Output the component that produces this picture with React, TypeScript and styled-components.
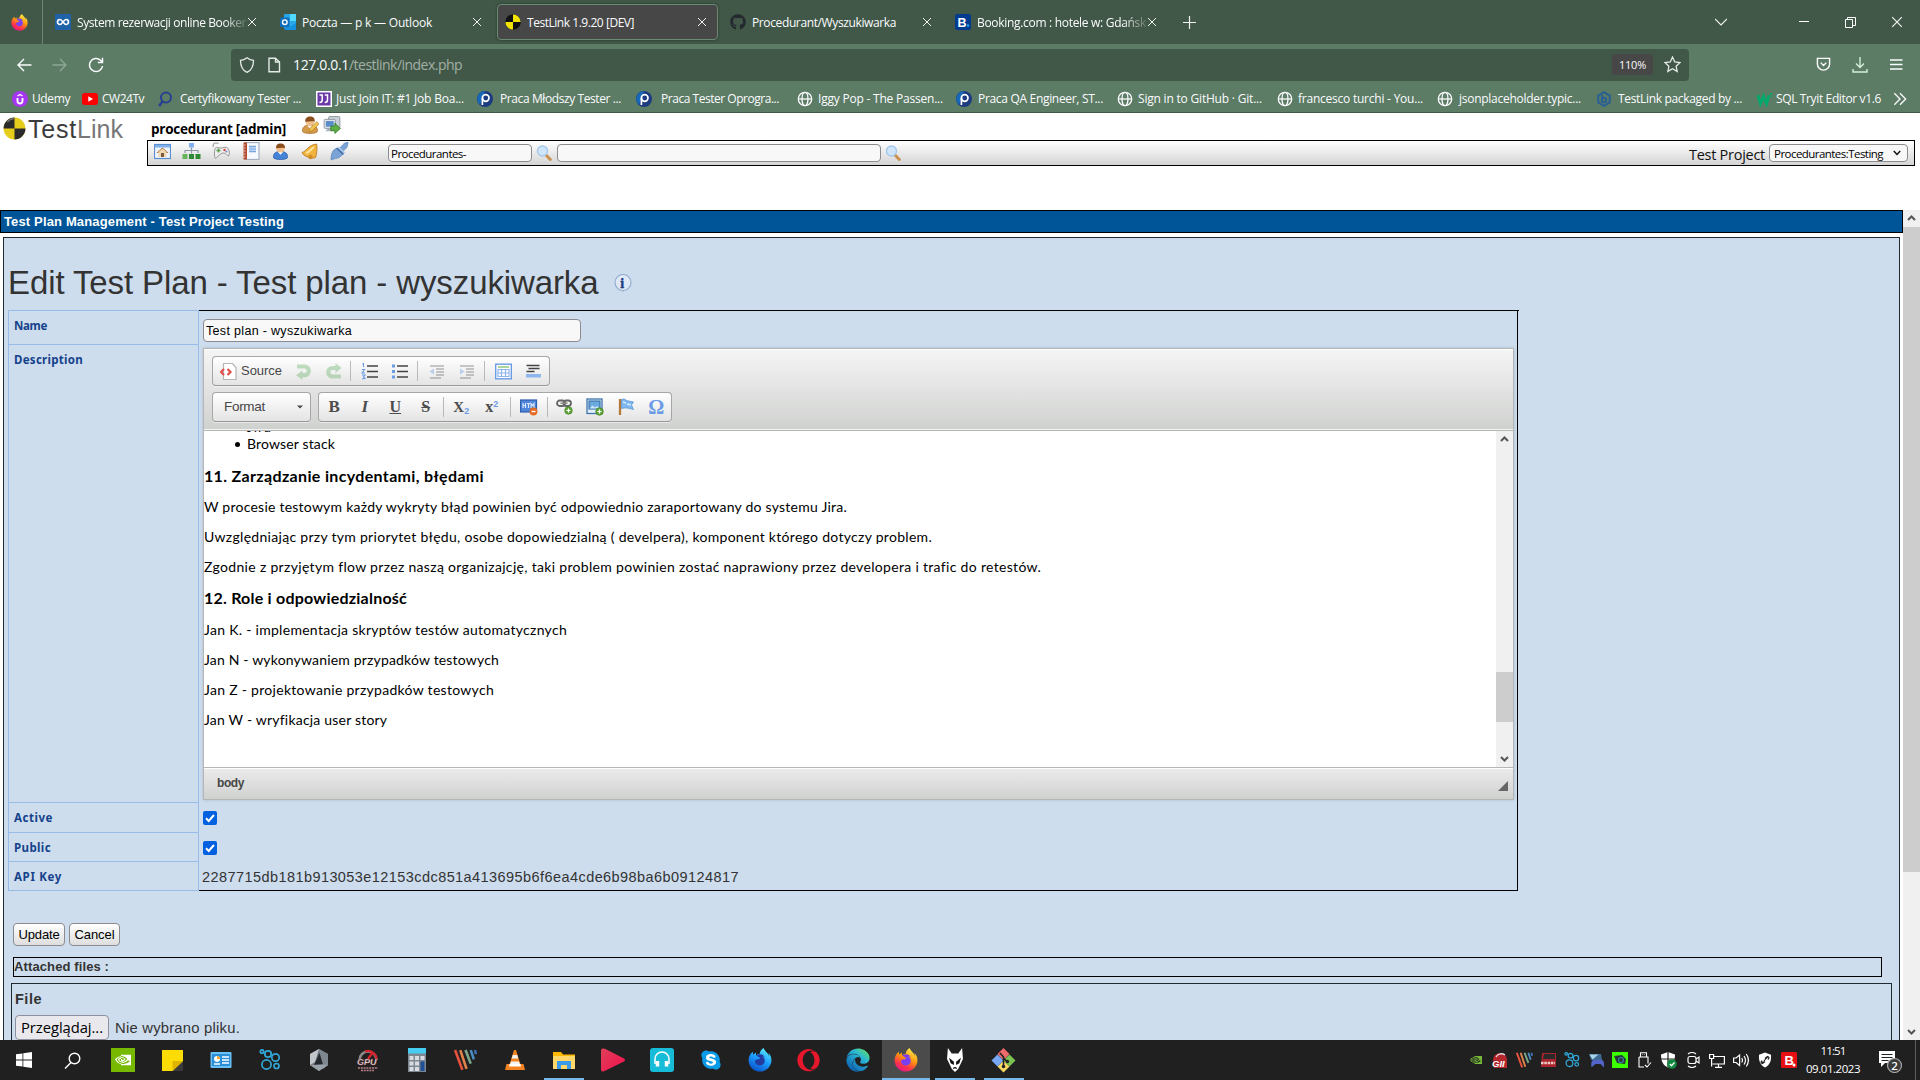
import React, { useLayoutEffect, useRef } from "react";
import styled, { createGlobalStyle, css } from "styled-components";
import { FaGithub, FaYoutube, FaOpera, FaEdge, FaFirefoxBrowser, FaSkype } from "react-icons/fa";
import { SiNvidia } from "react-icons/si";

const ui = `"Open Sans", "Noto Sans", sans-serif`;
const arial = `"Liberation Sans", Arial, sans-serif`;

const GlobalStyle = createGlobalStyle`
  * { box-sizing: border-box; }
  body { margin: 0; overflow: hidden; background: #fff; font-family: ${arial}; }
  svg { display: block; flex: none; }
`;

/* ---------- text helper: tracks a run of text out to a known width ---------- */

const Run = styled.span`
  display: inline-block;
  white-space: pre;
`;

const Text = ({ w, children }: { w: number; children: string }) => {
  const ref = useRef<HTMLSpanElement>(null);
  useLayoutEffect(() => {
    const el = ref.current;
    if (!el) return;
    el.style.letterSpacing = "0px";
    const natural = el.getBoundingClientRect().width;
    el.style.letterSpacing = `${(w - natural) / children.length}px`;
  }, [w, children]);
  return <Run ref={ref}>{children}</Run>;
};

/* ---------- browser chrome ---------- */

const Screen = styled.div`
  width: 1920px;
  height: 1080px;
  display: flex;
  flex-direction: column;
  overflow: hidden;
`;

const TabBar = styled.div`
  height: 44px;
  flex: none;
  background: #415848;
  display: flex;
  color: #fbfbfe;
  font: 12px ${ui};
`;

const FirefoxView = styled.div`
  width: 43px;
  padding: 0 4px 0 0;
  margin-right: 2px;
  border-right: 1px solid #6c8574;
  display: flex;
  align-items: center;
  justify-content: center;
`;

const TabBox = styled.div<{ $active?: boolean }>`
  width: 221px;
  height: 36px;
  margin: 4px 2px;
  padding: 0 9px 0 ${(p) => (p.$active ? 7 : 8)}px;
  display: flex;
  align-items: center;
  border-radius: 4px;
  ${(p) => p.$active && css`
    background: #474747;
    border: 1px solid #6b8b75;
    box-shadow: 0 0 3px #0006;
  `}
`;

const TabTitle = styled.div<{ $fade?: boolean }>`
  margin-left: 6px;
  width: 170px;
  flex: none;
  overflow: hidden;
  ${(p) => p.$fade && css`mask-image: linear-gradient(90deg, #000 86%, #0003 99%);`}
`;

const TabButtons = styled.div`
  flex: 1;
  display: flex;
  align-items: center;
  padding-left: 12px;
`;

const WindowButtons = styled.div`
  margin-left: auto;
  padding-right: 17px;
  display: flex;
  align-items: center;
`;

const Gap = styled.div<{ $w: number }>`
  width: ${(p) => p.$w}px;
  flex: none;
`;

const NavBar = styled.div`
  height: 40px;
  flex: none;
  background: #5c7c65;
  display: flex;
  align-items: center;
  padding: 1px 16px 0;
`;

const UrlBar = styled.div`
  width: 1458px;
  height: 32px;
  margin: 0 127px 0 127px;
  padding: 0 8px;
  border-radius: 4px;
  background: #415848;
  display: flex;
  align-items: center;
`;

const Address = styled.div`
  margin-left: 11px;
  flex: 1;
  color: #a3b0a6;
  font: 14px ${ui};
  b { color: #fbfbfe; font-weight: 400; }
`;

const ZoomBadge = styled.div`
  width: 41px;
  height: 21px;
  margin-right: 11px;
  border-radius: 3px;
  background: #474747;
  color: #fbfbfe;
  font: 11px/21px ${ui};
  text-align: center;
`;

const BookmarksBar = styled.div`
  height: 29px;
  flex: none;
  background: #5c7c65;
  border-bottom: 1px solid #415848;
  padding: 1px 0 0 12px;
  display: flex;
  align-items: center;
  color: #fbfbfe;
  font: 12px ${ui};
`;

const Bookmark = styled.div<{ $w: number }>`
  width: ${(p) => p.$w}px;
  flex: none;
  display: flex;
  align-items: center;
`;

const BookmarkLabel = styled.div<{ $gap: number }>`
  margin-left: ${(p) => p.$gap}px;
`;

/* ---------- TestLink header ---------- */

const SiteHeader = styled.header`
  height: 97px;
  flex: none;
  display: flex;
  background: #fff;
`;

const Brand = styled.div`
  width: 147px;
  padding: 4px 0 0 3px;
  display: flex;
  font: 25px/25px ${arial};
  color: #3c3c3c;
`;

const BrandName = styled.div`
  margin-left: 2px;
  white-space: nowrap;
  i { font-style: normal; color: #777; }
`;

const HeaderMain = styled.div`
  width: 1768px;
`;

const UserLine = styled.div`
  height: 27px;
  padding: 4px 0 0 4px;
  display: flex;
  align-items: center;
  font: bold 13.5px ${ui};
  color: #000;
  svg { margin-top: -8px; }
`;

const MenuBar = styled.nav`
  height: 26px;
  border: 1px solid #000;
  background: linear-gradient(#fff, #ececec 45%, #d4d4d4);
  padding: 0 6px 0 4px;
  display: flex;
  align-items: center;
`;

const MenuIcons = styled.div`
  display: flex;
  gap: 9.5px;
  margin: -4px 39px 0 0;
`;

const Field = styled.div<{ $w: number; $h?: number; $ml?: number }>`
  width: ${(p) => p.$w}px;
  height: ${(p) => p.$h ?? 18}px;
  margin-left: ${(p) => p.$ml ?? 0}px;
  padding: 0 2px;
  display: flex;
  align-items: center;
  border: 1px solid #8b8b90;
  border-radius: 4px;
  background: #f8f8f8;
  color: #000;
`;

const SmallText = styled.div`
  padding-top: 1px;
  font: 11.5px/16px ${ui};
  white-space: nowrap;
`;

const ProjectLabel = styled.div`
  margin-left: auto;
  padding-top: 3px;
  font: 14.5px/18px ${ui};
  color: #111;
`;

/* ---------- page frame ---------- */

const Frame = styled.div`
  height: 830px;
  flex: none;
  display: flex;
`;

const Page = styled.main`
  width: 1903px;
  height: 830px;
  overflow: hidden;
`;

const TitleBar = styled.div`
  height: 23px;
  border: 1px solid #000;
  background: #005498;
  padding: 1px 0 0 3px;
  color: #fff;
  font: bold 13px/20px ${arial};
`;

const WorkPane = styled.section`
  margin: 4px 3px 0;
  height: 820px;
  border: 1px solid #1f2a33;
  background: #cddded;
  padding: 0 7px 0 4px;
`;

const Heading = styled.h1`
  margin: 0;
  height: 72px;
  padding-top: 17px;
  display: flex;
  align-items: center;
  gap: 15px;
  color: #333;
  font: 400 33px/36px ${arial};
`;

const PlanForm = styled.div`
  width: 1510px;
  display: grid;
  grid-template-columns: 191px 1319px;
  grid-template-rows: 34px 458px 30px 29px 29px;
  border-bottom: 1px solid #000;
  border-right: 1px solid #000;
`;

const Label = styled.div<{ $last?: boolean }>`
  border: 1px solid #99bbe8;
  border-bottom-width: ${(p) => (p.$last ? 1 : 0)}px;
  margin-bottom: ${(p) => (p.$last ? -1 : 0)}px;
  padding: 6px 0 0 5px;
  color: #15428b;
  font: bold 11.5px/18px "Noto Sans", "DejaVu Sans", sans-serif;
`;

const Value = styled.div<{ $top?: boolean; $pt?: number }>`
  padding: ${(p) => p.$pt ?? 0}px 3px 0 4px;
  margin-right: -1px;
  border-top: ${(p) => (p.$top ? "1px solid #000" : "0")};
`;

const KeyValue = styled(Value)`
  padding-left: 3px;
`;

const ArialText = styled.div<{ $size: number; $bold?: boolean; $color?: string }>`
  font: ${(p) => (p.$bold ? "bold" : 400)} ${(p) => p.$size}px/18px ${arial};
  color: ${(p) => p.$color ?? "#333"};
  white-space: nowrap;
`;

/* ---------- rich text editor ---------- */

const Editor = styled.div`
  width: 1311px;
  height: 452px;
  border: 1px solid #b6b6b6;
  box-shadow: 0 0 3px #00000026;
  display: flex;
  flex-direction: column;
`;

const EditorTop = styled.div`
  height: 82px;
  flex: none;
  padding: 7px 8px;
  border-bottom: 1px solid #b6b6b6;
  box-shadow: inset 0 1px #fff, inset 0 -1px #f3f3f3;
  background: linear-gradient(#f5f5f5, #cfd1cf);
`;

const ToolRow = styled.div`
  display: flex;
  gap: 7px;
  height: 36px;
`;

const ToolGroup = styled.div<{ $w: number }>`
  width: ${(p) => p.$w}px;
  height: 30px;
  border: 1px solid #a6a6a6;
  border-bottom-color: #979797;
  border-radius: 4px;
  background: linear-gradient(#fff, #e4e4e4);
  box-shadow: 0 1px #ffffff80;
  display: flex;
  align-items: center;
`;

const Tool = styled.div<{ $w?: number; $dim?: boolean }>`
  width: ${(p) => p.$w ?? 30.5}px;
  flex: none;
  display: flex;
  align-items: center;
  justify-content: center;
  opacity: ${(p) => (p.$dim ? 0.4 : 1)};
`;

const Glyph = styled.span<{ $italic?: boolean; $line?: string; $size?: number; $blue?: boolean }>`
  font: ${(p) => (p.$italic ? "italic" : "normal")} bold ${(p) => p.$size ?? 17}px/20px "Liberation Serif", serif;
  color: ${(p) => (p.$blue ? "#6b9be6" : "#4d4d4d")};
  text-decoration: ${(p) => p.$line ?? "none"};
  text-decoration-thickness: 1px;
  sub, sup { font: bold 9px/0 ${arial}; color: #6b9be6; }
  sub { vertical-align: -2px; }
  sup { vertical-align: 5px; }
`;

const Divider = styled.div`
  width: 1px;
  height: 20px;
  background: #b9b9b9;
  flex: none;
`;

const EditorBody = styled.div`
  height: 336px;
  flex: none;
  background: #fff;
  display: flex;
`;

const Doc = styled.div`
  flex: 1;
  height: 336px;
  overflow: hidden;
  color: #000;
  font: 14px/18px Lato, ${ui};
`;

const Bullets = styled.ul`
  margin: -13px 0 0;
  padding-left: 43px;
  list-style: none;
`;

const Item = styled.li`
  height: 17px;
  display: flex;
  align-items: center;
  &::before {
    content: "";
    width: 5px;
    height: 5px;
    margin: 2px 7px 0 -12px;
    border-radius: 50%;
    background: #000;
  }
`;

const DocHeading = styled.h3<{ $mt: number }>`
  margin: ${(p) => p.$mt}px 0 0;
  font: bold 16px/20px Lato, ${ui};
`;

const Para = styled.p<{ $mt?: number }>`
  margin: ${(p) => p.$mt ?? 12}px 0 0;
  height: 18px;
`;

const EditorBottom = styled.div`
  flex: 1;
  border-top: 1px solid #b6b6b6;
  background: linear-gradient(#ebebeb, #cfd1cf);
  box-shadow: inset 0 1px #fff;
  padding: 0 5px 1px 13px;
  display: flex;
  align-items: center;
  justify-content: space-between;
`;

const Grip = styled.div`
  margin-top: 6px;
  border: 5px solid transparent;
  border-right-color: #666;
  border-bottom-color: #666;
`;

const ScrollTrack = styled.div<{ $h: number }>`
  width: 17px;
  height: ${(p) => p.$h}px;
  flex: none;
  background: #f0f0f0;
  display: flex;
  flex-direction: column;
`;

const ScrollArrow = styled.div`
  height: 17px;
  display: flex;
  align-items: center;
  justify-content: center;
`;

const Thumb = styled.div<{ $top: number; $h: number }>`
  margin-top: ${(p) => p.$top}px;
  margin-bottom: auto;
  height: ${(p) => p.$h}px;
  background: #cdcdcd;
`;

const Check = styled.div`
  width: 14px;
  height: 14px;
  border-radius: 2px;
  background: #0060df;
`;

const Actions = styled.div`
  margin: 32px 0 0 5px;
  display: flex;
  gap: 4px;
`;

const Button = styled.div<{ $w: number }>`
  width: ${(p) => p.$w}px;
  height: 23px;
  border: 1px solid #8b8b90;
  border-radius: 4px;
  background: linear-gradient(#fff, #dedede);
  display: flex;
  align-items: center;
  justify-content: center;
`;

const AttachedTitle = styled.div`
  width: 1869px;
  height: 20px;
  margin: 11px 0 0 5px;
  border: 1px solid #000;
`;

const FileBox = styled.div`
  width: 1881px;
  height: 80px;
  margin: 6px 0 0 3px;
  border: 1px solid #1f2a33;
  padding: 6px 0 0 3px;
`;

const FileRow = styled.div`
  margin-top: 7px;
  display: flex;
  align-items: center;
  gap: 6px;
`;

const BrowseButton = styled.div`
  width: 94px;
  height: 25px;
  border: 1px solid #8f8f9d;
  border-radius: 4px;
  background: #e9e9ed;
  color: #000;
  font: 14.8px/22px ${ui};
  text-align: center;
`;

/* ---------- Windows taskbar ---------- */

const Taskbar = styled.footer`
  height: 40px;
  flex: none;
  background: #202021;
  display: flex;
`;

const TaskItem = styled.div<{ $w?: number; $open?: boolean; $active?: boolean }>`
  width: ${(p) => p.$w ?? 49}px;
  height: 40px;
  flex: none;
  display: flex;
  align-items: center;
  justify-content: center;
  background: ${(p) => (p.$active ? "#4b4b4b" : "none")};
  ${(p) => p.$open && css`
    background-image: linear-gradient(#76b9ed, #76b9ed);
    background-size: ${p.$active ? 48 : 40}px 2px;
    background-position: bottom center;
    background-repeat: no-repeat;
  `}
`;

const Tray = styled.div`
  margin-left: auto;
  display: flex;
  color: #fff;
`;

const Clock = styled.div`
  width: 64px;
  height: 40px;
  padding-top: 2px;
  font: 11.5px/18px ${ui};
  text-align: center;
`;

const ShowDesktop = styled.div`
  width: 5px;
  border-left: 1px solid #5c5c5c;
`;

/* ---------- drawings ---------- */

type IconProps = { s?: number; children: React.ReactNode; stroke?: string; sw?: number; vb?: number };
const Svg = ({ s = 16, vb = 16, stroke = "none", sw = 1.2, children }: IconProps) => (
  <svg width={s} height={s} viewBox={`0 0 ${vb} ${vb}`} fill="none" stroke={stroke} strokeWidth={sw}>{children}</svg>
);

const Gradients = () => (
  <svg width="0" height="0">
    <defs>
      <linearGradient id="ff" x1="0.8" y1="0" x2="0.3" y2="1">
        <stop offset="0" stopColor="#fff44f" /><stop offset=".45" stopColor="#ff980e" />
        <stop offset=".75" stopColor="#ff3647" /><stop offset="1" stopColor="#e31587" />
      </linearGradient>
      <linearGradient id="ffdev" x1="0.8" y1="0" x2="0.3" y2="1">
        <stop offset="0" stopColor="#5ff0ff" /><stop offset=".5" stopColor="#1c9dff" /><stop offset="1" stopColor="#0a50c8" />
      </linearGradient>
      <linearGradient id="edge" x1="1" y1="0" x2="0.2" y2="1">
        <stop offset="0" stopColor="#6be64b" /><stop offset=".4" stopColor="#2bb8d6" /><stop offset="1" stopColor="#0a5cb0" />
      </linearGradient>
      <linearGradient id="play" x1="0" y1="0" x2="1" y2="1">
        <stop offset="0" stopColor="#e0405a" /><stop offset="1" stopColor="#f0104c" />
      </linearGradient>
    </defs>
  </svg>
);

const Firefox = ({ s, dev }: { s: number; dev?: boolean }) => (
  <svg width={s} height={s} viewBox="0 0 24 24">
    <circle cx="12" cy="13" r="7" fill={dev ? "#233a9e" : "#7a3ff0"} />
    <FaFirefoxBrowser size={24} fill={dev ? "url(#ffdev)" : "url(#ff)"} />
  </svg>
);

const Cross = ({ s = 10 }) => <Svg s={s} vb={10} stroke="#f0f3f1" sw={1}><path d="M1 1l8 8M9 1L1 9" /></Svg>;

const Ball = ({ s = 16, dark = "#111", hi = "#f4e300" }) => (
  <Svg s={s}>
    <circle cx="8" cy="8" r="7.6" fill={dark} />
    <path d="M8 8V.4A7.6 7.6 0 0 0 .4 8zM8 8v7.6A7.6 7.6 0 0 0 15.6 8z" fill={dark} />
    <path d="M8 8V.4A7.6 7.6 0 0 1 15.6 8zM8 8v7.6A7.6 7.6 0 0 1 .4 8z" fill={hi} />
  </Svg>
);

/* Brand mark: the yellow and dark quarters sit on a slightly domed ball */
const BrandBall = () => (
  <Svg s={23}>
    <circle cx="8" cy="8" r="7.6" fill="#e6cd1c" />
    <path d="M7.500 8Q5 7.200.5 7.800A7.600 7.600 0 0 0 1.200 11.500Q4 10.500 7.300 11.500zM8 8L8 15.600A7.600 7.600 0 0 0 15.400 6Q12 7.200 8 8z" fill="none" />
    <path d="M8 8V.4A7.600 7.600 0 0 0 .4 8zM8 8v7.600A7.600 7.600 0 0 0 15.600 8z" fill="#2b2b2b" />
    <path d="M3 3.500A7 7 0 0 1 7.500 1" stroke="#777" strokeWidth="1" />
  </Svg>
);

const Globe = () => (
  <Svg stroke="#fbfbfe" sw={1.3}><circle cx="8" cy="8" r="6.7" /><ellipse cx="8" cy="8" rx="3" ry="6.7" /><path d="M1.3 8h13.4" /></Svg>
);

const letterFont = { fontFamily: "Liberation Sans, sans-serif", fontWeight: 700 };

const Pracuj = () => (
  <Svg>
    <circle cx="8" cy="8" r="8" fill="#1c3a80" />
    <path d="M8 0a8 8 0 0 0-5 14z" fill="#1768b8" />
    <circle cx="8.7" cy="7" r="3.3" stroke="#fff" strokeWidth="1.7" /><path d="M5.4 7v7" stroke="#fff" strokeWidth="1.7" />
  </Svg>
);

const Magnifier = () => (
  <Svg s={16}>
    <path d="M10.5 10.5l3.8 4" stroke="#c9924f" strokeWidth="3" strokeLinecap="round" />
    <circle cx="6.5" cy="6" r="5" fill="#cfe6fa" stroke="#a5c8ea" strokeWidth="1.4" />
  </Svg>
);

const Person = ({ pencil }: { pencil?: boolean }) => (
  <Svg s={pencil ? 18 : 17}>
    <path d="M1.5 14c-.6-4 1.5-6 6.5-6s7.1 2 6.5 6c-2 2-11 2-13 0z" fill={pencil ? "#d59a4a" : "#4483d6"} stroke={pencil ? "#a86f2c" : "#2a5ca8"} strokeWidth=".7" />
    <path d="M5.5 8.5L8 11l2.5-2.5z" fill="#fff" />
    <circle cx="8" cy="5" r="3.9" fill="#f0bf8b" />
    <path d="M3.8 5C3.5 1.5 6 .3 8.2.4c2.6 0 4.4 1.700 4 4.600C10 4 7 5 3.800 5z" fill="#8a4d1c" />
    {pencil && <path d="M7 14l1-3 6-6 2 2-6 6z" fill="#f3c64d" stroke="#a8772c" strokeWidth=".6" />}
  </Svg>
);

const Logout = () => (
  <Svg s={18}>
    <rect x="5" y=".5" width="10" height="10" rx="1" fill="#c9d0d8" stroke="#8a949e" strokeWidth=".8" />
    <rect x="1" y="3" width="10" height="8" rx="1" fill="#dfe5ea" stroke="#8a949e" strokeWidth=".8" />
    <rect x="2.5" y="4.5" width="7" height="5" fill="#5a8cc8" /><path d="M2 13.5h8l-2-2H4z" fill="#aab2ba" />
    <path d="M7 9h3.500V6.500L15.500 11l-5 4.500V13H7z" fill="#5fae46" stroke="#2f7a20" strokeWidth=".7" />
  </Svg>
);

const menuIcons: React.ReactNode[] = [
  <Svg s={17} vb={17}><rect x=".5" y="1.5" width="16" height="14" fill="#eef5fd" stroke="#5b8fd0" /><path d="M1 2h15v2.500H1z" fill="#7fb0ec" /><path d="M2.500 10l6-5.500 6 5.500z" fill="#a76c3c" /><path d="M4.500 9l4-3.500 4 3.500v5h-8z" fill="#f1d8b0" /><path d="M7 10h3v4H7z" fill="#7c5a3c" /></Svg>,
  <Svg s={19} vb={19}><rect x="7" y="1" width="5" height="4.5" fill="#7fb0f0" /><path d="M9.500 5.500v5M3 11V8.500h13V11M9.500 8.500v3" stroke="#8b98a8" strokeWidth="1.2" /><path d="M.5 12h5v5h-5z" fill="#67b35b" /><path d="M7 12h5v5H7zM13.500 12h5v5h-5z" fill="#2e8a34" /></Svg>,
  <Svg s={18} vb={18}><path d="M1.500 5C0 1 4 0 6.500 1.500" stroke="#a5a5a5" /><path d="M4 16.500C2 17 2 8 3.500 6 5 4.500 7 6.500 9.500 6c2-.5 5-1.500 6.500.5C18 9 17.500 13 16.500 14c-1.500 0-2.500-3-4.500-3-2.500 0-5 1.500-8 5.500z" fill="#ededed" stroke="#8c8c8c" strokeWidth=".9" /><path d="M4.500 8.500h4M6.500 6.500v4" stroke="#59a14f" strokeWidth="1.4" /><circle cx="12.5" cy="8" r="1.200" fill="#d9443a" /><circle cx="14.5" cy="9.500" r="1" fill="#6a8ee0" /></Svg>,
  <Svg s={18} vb={18}><rect x="3" y=".5" width="14" height="17" fill="#f6f9fd" stroke="#a5b1c0" /><rect x="1.5" y=".5" width="3.5" height="17" fill="#b5482f" /><path d="M.5 3h3M.5 6h3M.5 9h3M.5 12h3M.5 15h3" stroke="#e5c0b0" /><path d="M7 4.500h7M7 9.500h7" stroke="#7aa5dd" strokeWidth="1.5" /><rect x="7" y="5.5" width="7" height="3" fill="#9dc0ee" /></Svg>,
  <Person />,
  <Svg s={17} vb={17}><path d="M15.500 1c1 2 .5 10-1 13.500C11 16.500 2 13 1 9.500 5.500 8.500 7 2 15.500 1z" fill="#f0b43c" stroke="#b5751c" strokeWidth=".8" /><path d="M5 10c4-1 5-4 8-6" stroke="#fbe3a0" strokeWidth="2" /><circle cx="9.5" cy="14" r="2.200" fill="#d18d26" /></Svg>,
  <Svg s={19} vb={19}><path d="M1 18c0-5 1-9 4-11 2-1 3 0 5-1 2-2 3-5 8-6 0 5-2 7-4 8-1 1 0 3-2 5-3 4-7 3-11 5z" fill="#7ba4d6" stroke="#4e7bb5" strokeWidth=".6" /><path d="M6.500 6l7 6.500" stroke="#456fa8" strokeWidth="1.5" /><path d="M8 5l7 6" stroke="#b5cfee" /></Svg>,
];

const Chevron = ({ up }: { up?: boolean }) => (
  <Svg s={9} vb={9} stroke="#555" sw={2}><path d={up ? "M1 6l3.500-3.500L8 6" : "M1 3l3.500 3.500L8 3"} /></Svg>
);

const Rings = ({ s = 22 }) => (
  <Svg s={s} vb={22} stroke="#31a8d8" sw={1.7}>
    <circle cx="3" cy="2.5" r="1.7" /><circle cx="9" cy="5" r="3.2" /><circle cx="16.5" cy="8.5" r="3.7" /><circle cx="7.5" cy="15.5" r="4.6" /><circle cx="17.5" cy="17" r="2.5" />
  </Svg>
);

const Stripes = ({ s = 22 }) => (
  <Svg s={s} vb={22} sw={2.5}>
    <path d="M1 1l7 19" stroke="#e8533f" /><path d="M6 1l6 18" stroke="#e0834a" /><path d="M11 1l5 13" stroke="#7ba88c" /><path d="M16 1l3 9" stroke="#4a8cc0" /><path d="M20 1l1 4" stroke="#3d6fae" />
  </Svg>
);

const GpuBadge = ({ s = 24 }) => (
  <Svg s={s} vb={24}>
    <path d="M3.500 12a8.500 8.500 0 0 1 17 0" stroke="#8a8a8a" strokeWidth="2.5" /><path d="M9 3.500A8.500 8.500 0 0 1 20.500 11M12 11l5-7" stroke="#d8202a" strokeWidth="2.2" />
    <text x="1" y="17" fontSize="9" fill="#f0f0f0" stroke="#802028" strokeWidth=".3" {...letterFont} fontStyle="italic">GPU</text>
    <path d="M2 20h20M5 22.500h13" stroke="#b98088" strokeWidth="1.6" strokeDasharray="2 .8" />
  </Svg>
);

/* Plus badge used by the insert-link and insert-image tools */
const PlusBadge = ({ x, y }: { x: number; y: number }) => (
  <g><circle cx={x} cy={y} r="3.8" fill="#5fa53a" stroke="#3c7a1f" strokeWidth=".6" /><path d={`M${x - 2} ${y}h4M${x} ${y - 2}v4`} stroke="#fff" strokeWidth="1.2" /></g>
);

/* ---------- data ---------- */

const tabs = [
  { title: "System rezerwacji online Booker", w: 169, fade: true, icon: <Svg><rect width="16" height="16" fill="#1f62a8" /><path d="M5 5.500a2.500 2.500 0 1 0 0 5c2 0 4-5 6-5a2.500 2.500 0 1 1 0 5c-2 0-4-5-6-5z" stroke="#fff" strokeWidth="1.7" /></Svg> },
  { title: "Poczta — p k — Outlook", w: 130, icon: <Svg><rect x="4" y="0" width="12" height="15" rx="1" fill="#28a8ea" /><path d="M10 0h6v7h-6z" fill="#50d9ff" /><path d="M4 9l6 4 6-4v7H5z" fill="#1490df" /><rect y="3.5" width="9.5" height="9.5" rx="1" fill="#0f6cbd" /><circle cx="4.8" cy="8.2" r="2.3" stroke="#fff" strokeWidth="1.4" /></Svg> },
  { title: "TestLink 1.9.20 [DEV]", w: 107, active: true, icon: <Ball s={16} /> },
  { title: "Procedurant/Wyszukiwarka", w: 144, icon: <FaGithub size={16} color="#24292f" /> },
  { title: "Booking.com : hotele w: Gdańsk", w: 169, fade: true, icon: <Svg><rect width="16" height="16" rx="2.5" fill="#013b8f" /><text x="2.5" y="12.5" fontSize="12.5" fill="#fff" {...letterFont}>B</text><circle cx="13" cy="11.5" r="1.2" fill="#20a8e8" /></Svg> },
];

const bookmarks = [
  { x: 12, tx: 32, w: 38, label: "Udemy", icon: <Svg><circle cx="8" cy="8" r="8" fill="#a435f0" /><path d="M5.500 7v3a2.500 2.500 0 0 0 5 0V7" stroke="#fff" strokeWidth="1.9" /><path d="M5.500 5L8 3.500 10.500 5" stroke="#fff" strokeWidth="1.4" /></Svg> },
  { x: 82, tx: 102, w: 42, label: "CW24Tv", icon: <Svg><rect y="2" width="16" height="12" rx="3" fill="#f00" /><path d="M6.300 5.300L11 8l-4.700 2.700z" fill="#fff" /></Svg> },
  { x: 157, tx: 180, w: 121, label: "Certyfikowany Tester ...", icon: <Svg stroke="#27408f" sw={2}><circle cx="9" cy="6.5" r="5" /><path d="M5.500 10.500L2 15" strokeWidth="2.5" /></Svg> },
  { x: 316, tx: 336, w: 128, label: "Just Join IT: #1 Job Boa...", icon: <Svg><rect x=".75" y=".75" width="14.5" height="14.5" fill="#6a3aa8" stroke="#fff" strokeWidth="1.5" /><path d="M3.500 4h2.700v5c0 2-1 2.500-2.700 2.500M8.800 4h2.700v5c0 2-1 2.500-2.700 2.500" stroke="#fff" strokeWidth="1.5" /></Svg> },
  { x: 477, tx: 500, w: 121, label: "Praca Młodszy Tester ...", icon: <Pracuj /> },
  { x: 636, tx: 661, w: 118, label: "Praca Tester Oprogra...", icon: <Pracuj /> },
  { x: 797, tx: 818, w: 125, label: "Iggy Pop - The Passen...", icon: <Globe /> },
  { x: 956, tx: 978, w: 125, label: "Praca QA Engineer, ST...", icon: <Pracuj /> },
  { x: 1117, tx: 1138, w: 124, label: "Sign in to GitHub · Git...", icon: <Globe /> },
  { x: 1277, tx: 1298, w: 125, label: "francesco turchi - You...", icon: <Globe /> },
  { x: 1437, tx: 1459, w: 122, label: "jsonplaceholder.typic...", icon: <Globe /> },
  { x: 1596, tx: 1618, w: 124, label: "TestLink packaged by ...", icon: <Svg stroke="#2a5f94" sw={2}><path d="M8 1.200l5.800 3.400v6.800L8 14.800l-5.800-3.400V4.600z" /><path d="M6 4v6.500" /><circle cx="8" cy="9" r="2.2" /></Svg> },
  { x: 1757, tx: 1776, w: 105, label: "SQL Tryit Editor v1.6", icon: <Svg stroke="#04aa6d" sw={2.8}><path d="M.8 4l2.700 9L6.500 5l3 8L12 4" /><path d="M13 2.500h2l-1 1.300 1 1-1.500 1" strokeWidth="1" /></Svg> },
];

const taskIcons: { w?: number; open?: boolean; active?: boolean; icon: React.ReactNode }[] = [
  { w: 48, icon: <Svg><path d="M0 2.300L6.500 1.400V7.600H0zM7.300 1.300L16 0v7.600H7.300zM0 8.400h6.500v6.200L0 13.700zM7.300 8.400H16V16l-8.700-1.300z" fill="#fff" /></Svg> },
  { w: 49, icon: <Svg s={17} vb={17} stroke="#fff" sw={1.4}><circle cx="10.5" cy="6.5" r="5.3" /><path d="M7 10.500L1 16.500" /></Svg> },
  { w: 51, icon: <Svg s={24} vb={24}><rect width="24" height="24" fill="#76b900" /><g transform="translate(4 4)"><SiNvidia size={16} color="#fff" /></g></Svg> },
  { w: 48, icon: <Svg s={23} vb={23}><path d="M1 1h21v21H1z" fill="#fddc05" /><path d="M22 12v10H11.500z" fill="#3a3a3a" /><path d="M11.500 12H22L11.500 22z" fill="#e0b400" /></Svg> },
  { icon: <Svg s={22} vb={22}><rect x=".5" y="3" width="21" height="16" rx="1" fill="#69c0f2" /><rect x="2" y="5" width="18" height="12" fill="#2b8fd8" /><circle cx="7" cy="10" r="3" fill="#fff" /><path d="M7 10V7a3 3 0 0 1 3 3z" fill="#f5a623" /><path d="M12 8h7M12 11h7M12 14h7M4 15h6" stroke="#fff" strokeWidth="1.3" /></Svg> },
  { icon: <Rings /> },
  { icon: <Svg s={24} vb={24}><path d="M12 1l9 5v11l-9 6-9-6V6z" fill="#6f7780" /><path d="M12 1l9 5v11l-5 4z" fill="#7e868e" /><path d="M12 1L3 6v11l5-3z" fill="#c0c6cc" /><path d="M12.500 5l3.500 11.500L7 17z" fill="#25282c" /><path d="M3 17l13-.5 5 .5-9 6z" fill="#9aa2aa" /></Svg> },
  { icon: <GpuBadge /> },
  { icon: <Svg s={24} vb={24}><rect x="3" width="18" height="24" fill="#7d8791" /><path d="M3 0h18v5.500H3z" fill="#48cdf2" /><path d="M4.500 8h4v4h-4zM10 8h4v4h-4zM15.500 8h4v4h-4zM4.500 13.500h4v4h-4zM10 13.500h4v4h-4zM4.500 19h4v4h-4zM10 19h4v4h-4z" fill="#d9dde1" /><path d="M15.500 13.500h4V23h-4z" fill="#1f4f96" /></Svg> },
  { icon: <Stripes s={23} /> },
  { icon: <Svg s={22} vb={22}><path d="M10 1h2l5 16H5z" fill="#f58220" /><path d="M8.800 6h4.400l1 3.500H7.700zM7 12.500h8l1 3H6z" fill="#f4f4f4" /><path d="M2.500 15h17l1.500 6H1z" fill="#f58220" /><path d="M5.500 15h11l.5 2.500H5z" fill="#fff" /></Svg> },
  { open: true, icon: <Svg s={22} vb={22}><path d="M0 3h8l2 2.500h12V20H0z" fill="#ffb900" /><path d="M0 7h22v13H0z" fill="#ffd869" /><path d="M4 12h14v8h-4v-4H8v4H4z" fill="#3b9be8" /></Svg> },
  { icon: <Svg s={24} vb={24}><path d="M2 0.500q-2 0-2 2v19q0 3 3 1.700L23 13.500q2-1.500 0-3L4 .8z" fill="url(#play)" /></Svg> },
  { icon: <Svg s={24} vb={24}><rect width="24" height="24" rx="3" fill="#17bcd8" /><path d="M5 16v-5a7 7 0 0 1 14 0v5" stroke="#fff" strokeWidth="1.5" /><path d="M7.500 13v5.500M16.500 13v5.500" stroke="#fff" strokeWidth="3.5" /></Svg> },
  { icon: <Svg s={22} vb={22}><circle cx="11" cy="11" r="7" fill="#fff" /><FaSkype size={22} color="#0b9be8" /></Svg> },
  { icon: <Firefox s={24} dev /> },
  { icon: <FaOpera size={23} color="#e8182c" /> },
  { icon: <FaEdge size={24} fill="url(#edge)" /> },
  { w: 48, open: true, active: true, icon: <Firefox s={24} /> },
  { open: true, icon: <Svg s={24} vb={22}><path d="M4.500 0L8 5h6l3.500-5 .8 10L14 19l-3 3-3-3-4.300-9z" fill="#fff" /><path d="M5.500 9l4.500 3.500v3L7 14zM16.500 9L12 12.500v3l3-1.500z" fill="#111" /><path d="M9.500 19q1.500-2 3 0" stroke="#111" /></Svg> },
  { open: true, icon: <Svg s={25} vb={25}><path d="M12.500 0l6 6-6 6.500-6-6.500z" fill="#ef6a6a" /><path d="M12.500 12.500l6 6-6 6-6-6z" fill="#f7d860" /><path d="M6.500 6.500l6 6-6 6-6-6z" fill="#78a8f5" /><path d="M18.500 6.500l6 6-6 6-6-6z" fill="#7cc253" /><path d="M9 5l3.500 4v11M12.500 10l4 4" stroke="#222" strokeWidth="1.6" /><circle cx="12.5" cy="18.5" r="1.7" fill="#222" /><circle cx="16.5" cy="13.5" r="1.7" fill="#222" /></Svg> },
];

const trayIcons: React.ReactNode[] = [
  <SiNvidia size={12} color="#76b93a" />,
  <Svg s={17} vb={17}><path d="M1 9a7 7 0 0 1 14-2v9H2z" fill="#b3262d" /><path d="M4 5a6 6 0 0 1 9-2" stroke="#ddd" strokeWidth="1.3" /><text x="0" y="14.5" fontSize="9.5" fontStyle="italic" fill="#fff" {...letterFont}>GII</text></Svg>,
  <Stripes s={17} />,
  <Svg s={16}><path d="M2 1h14v14H1z" fill="#a8252d" /><path d="M4 2h11v5H3z" fill="#2a2a2a" /><path d="M1 11h14" stroke="#f1c8c8" strokeWidth="2.5" strokeDasharray="2.5 .8" /></Svg>,
  <Rings s={16} />,
  <Svg s={17} vb={17}><path d="M1 2h12l1 6H3z" fill="#3c6a94" /><path d="M1.500 2.500h9l-6 5z" fill="#a8d4e8" /><path d="M3.500 15c-1-6 1-7.500 3.500-7h5c3-.5 4.500 1 4 7-2 0-2-3-4-3H8c-2 0-2.500 3-4.500 3z" fill="#5363c8" /></Svg>,
  <Svg><rect width="16" height="16" fill="#3bff00" /><path d="M2 4l8-1 4 4-1 5-8-1z" fill="#27343c" /><circle cx="9" cy="8" r="2.5" stroke="#3d7da0" /></Svg>,
  <Svg stroke="#fff" sw={1.1}><path d="M4.500 5V.7h6V5M3 5h9v6.500M3 5v10h5M6 2.500h.5M8.500 2.500h.5M9 13l2 2 4-4.500" /></Svg>,
  <Svg s={17} vb={17}><path d="M8 0l7 2.500c0 7-2 10.500-7 13C3 13 1 9.500 1 2.500z" fill="#fff" /><path d="M8 0v15M1 7h14" stroke="#222" /><circle cx="12" cy="12" r="4.8" fill="#10893e" /><path d="M9.800 12l1.700 1.700 3-3.200" stroke="#fff" strokeWidth="1.3" /></Svg>,
  <Svg stroke="#fff" sw={1.2}><rect x="3" y="4.5" width="8" height="7" rx="2" /><path d="M11 7l3-2v6l-3-2M3 2q4-3 8 0M3 14q4 3 8 0" /></Svg>,
  <Svg stroke="#fff" sw={1.2}><path d="M5 4.500h10.400v7.500H3.500M9.500 12v3M6 15.300h7M.6 2.500h4v4h-4zM2.600 6.500v8" /></Svg>,
  <Svg stroke="#fff" sw={1.2}><path d="M.6 6v4.500h2.500l3.500 3V3l-3.500 3zM8.700 6q1.500 2.300 0 4.500M11 4q3 4.300 0 8.500M13.300 2q4.200 6.200 0 12.500" /></Svg>,
  <Svg><path d="M8 .5l6 2.300c.5 6-1 10-6 12.700C3 13 1.500 8.500 2 2.800z" fill="#fff" /><path d="M6.500 9.500L5 11M9 6.500L10.500 5M7 9l2-2.500M5 8.500q-2 2.500.5 3L8 9.500M11 7.500q2-2.500-.5-3L8 6.500" stroke="#222" strokeWidth="1.2" /></Svg>,
  <Svg><rect width="16" height="16" rx="1.5" fill="#e80f14" /><text x="3.5" y="13" fontSize="13" fill="#fff" {...letterFont}>B</text><circle cx="13" cy="13" r="1.5" fill="#fff" /></Svg>,
];

const indentLines = <path d="M2 3h14M8 6h8M8 9h8M8 12h8M2 15h11" stroke="#555" strokeWidth="1.6" />;

const App = () => (
  <Screen>
    <GlobalStyle />
    <TabBar>
      <FirefoxView><Firefox s={17} /></FirefoxView>
      {tabs.map((t) => (
        <TabBox key={t.title} $active={t.active}>
          {t.icon}
          <TabTitle $fade={t.fade}><Text w={t.w}>{t.title}</Text></TabTitle>
          <Cross />
        </TabBox>
      ))}
      <TabButtons>
        <Gap $w={1} />
        <Svg s={13} vb={13} stroke="#f0f3f1"><path d="M6.500 0v13M0 6.500h13" /></Svg>
        <WindowButtons>
          <Svg s={12} vb={12} stroke="#f0f3f1"><path d="M0 3l6 6 6-6" /></Svg>
          <Gap $w={72} />
          <Svg s={10} vb={10} stroke="#fff" sw={1}><path d="M0 4.500h10" /></Svg>
          <Gap $w={36} />
          <Svg s={11} vb={11} stroke="#fff" sw={1}><path d="M.5 2.500h7v8h-7zM2.500 2.500v-2h8v8h-3" /></Svg>
          <Gap $w={35} />
          <Cross s={12} />
        </WindowButtons>
      </TabButtons>
    </TabBar>

    <NavBar>
      <Svg stroke="#fbfbfe" sw={1.4}><path d="M8 2L2 8l6 6M2 8h13.500" /></Svg>
      <Gap $w={20} />
      <Svg stroke="#8fa696" sw={1.4}><path d="M8 2l6 6-6 6M14 8H.5" /></Svg>
      <Gap $w={20} />
      <Svg stroke="#fbfbfe" sw={1.5}><path d="M14.500 9a6.500 6.500 0 1 1-2-5.700L14 4.800M14.500.8v4.700H9.800" /></Svg>
      <UrlBar>
        <Svg stroke="#e4eae6" sw={1.3}><path d="M8 .8q3 2.400 6.500 2.600C14.500 9 13 13 8 15.300 3 13 1.500 9 1.500 3.400 5 3.200 8 .8 8 .8z" /></Svg>
        <Gap $w={11} />
        <Svg stroke="#e4eae6" sw={1.4}><path d="M3 1.200h6.500L13.500 5v9.800H3zM9.500 1.200V5h4" /></Svg>
        <Address><b><Text w={56}>127.0.0.1</Text></b><Text w={113}>/testlink/index.php</Text></Address>
        <ZoomBadge><Text w={27}>110%</Text></ZoomBadge>
        <Svg s={17} stroke="#e4eae6" sw={1.2}><path d="M8 1l2.100 4.600 5 .6-3.700 3.400 1 4.900L8 12l-4.400 2.500 1-4.900L.9 6.200l5-.6z" /></Svg>
      </UrlBar>
      <Svg s={15} stroke="#fbfbfe" sw={1.5}><path d="M1.500 1.500h13v6a6.500 6.500 0 0 1-13 0zM5 6l3 3 3-3" /></Svg>
      <Gap $w={21} />
      <Svg stroke="#d4eedb" sw={1.4}><path d="M8 0v10.500M4 6.500l4 4 4-4M1 12v3h14v-3" /></Svg>
      <Gap $w={20} />
      <Svg stroke="#fbfbfe" sw={1.3}><path d="M2 3h12.500M2 7.500h12.500M2 12h12.500" /></Svg>
    </NavBar>

    <BookmarksBar>
      {bookmarks.map((b, i) => (
        <Bookmark key={b.label} $w={(bookmarks[i + 1]?.x ?? 1893) - b.x}>
          {b.icon}
          <BookmarkLabel $gap={b.tx - b.x - 16}><Text w={b.w}>{b.label}</Text></BookmarkLabel>
        </Bookmark>
      ))}
      <Svg s={14} stroke="#fbfbfe" sw={1.5}><path d="M1.500 1.500L8 8l-6.500 6.500M8 1.500L14.500 8 8 14.500" /></Svg>
    </BookmarksBar>

    <SiteHeader>
      <Brand>
        <BrandBall />
        <BrandName><Text w={49}>Test</Text><i><Text w={46}>Link</Text></i></BrandName>
      </Brand>
      <HeaderMain>
        <UserLine>
          <Text w={135}>procedurant [admin]</Text>
          <Gap $w={15} /><Person pencil /><Gap $w={4} /><Logout />
        </UserLine>
        <MenuBar>
          <MenuIcons>{menuIcons.map((icon, i) => <Tool key={i} $w={20}>{icon}</Tool>)}</MenuIcons>
          <Field $w={144}><SmallText><Text w={75}>Procedurantes-</Text></SmallText></Field>
          <Gap $w={4} /><Magnifier />
          <Field $w={324} $ml={5} />
          <Gap $w={4} /><Magnifier />
          <ProjectLabel><Text w={76}>Test Project</Text></ProjectLabel>
          <Field $w={139} $ml={4}>
            <Gap $w={2} /><SmallText><Text w={109}>Procedurantes:Testing</Text></SmallText>
            <Gap $w={10} /><Svg s={8} vb={8} stroke="#111" sw={1.5}><path d="M.8 2l3.200 3.500L7.200 2" /></Svg>
          </Field>
        </MenuBar>
      </HeaderMain>
    </SiteHeader>

    <Frame>
      <Page>
        <TitleBar><Text w={280}>Test Plan Management - Test Project Testing</Text></TitleBar>
        <WorkPane>
          <Heading>
            <Text w={590.5}>Edit Test Plan - Test plan - wyszukiwarka</Text>
            <Svg s={18} vb={18}>
              <path d="M6 14h6l-3 4z" fill="#8faac8" /><circle cx="9" cy="8.5" r="8" fill="#dfe9f5" stroke="#94add0" />
              <text x="6.2" y="13.5" fontSize="14" fill="#1d3f86" stroke="#1d3f86" strokeWidth=".4" fontFamily="Liberation Serif, serif" fontWeight="700">i</text>
            </Svg>
          </Heading>
          <PlanForm>
            <Label><Text w={33}>Name</Text></Label>
            <Value $top $pt={8}>
              <Field $w={378} $h={23}><ArialText $size={12.5} $color="#000"><Text w={146}>Test plan - wyszukiwarka</Text></ArialText></Field>
            </Value>
            <Label><Text w={69}>Description</Text></Label>
            <Value $pt={4}>
              <Editor>
                <EditorTop>
                  <ToolRow>
                    <ToolGroup $w={338}>
                      <Gap $w={7} />
                      <Svg s={17} vb={17}><path d="M3.500.5h9l3.500 4v12H3.500z" fill="#fff" stroke="#b5b5b5" /><path d="M4 6L1 9l3 3M7.500 6l3 3-3 3" stroke="#e0504a" strokeWidth="2.2" /></Svg>
                      <Gap $w={4} />
                      <ArialText $size={13} $color="#474747"><Text w={41}>Source</Text></ArialText>
                      <Gap $w={6} />
                      <Tool $dim><Svg s={17} vb={17}><path d="M2 3.500h7.500a4.300 4.300 0 0 1 0 8.700H6" stroke="#6db36d" strokeWidth="4.2" /><path d="M7.500 7.500v9.500L1 12.300z" fill="#6db36d" /></Svg></Tool>
                      <Tool $dim><Svg s={17} vb={17}><path d="M12 5H7.500a4 4 0 0 0 0 8.500H16" stroke="#6db36d" strokeWidth="4.2" /><path d="M10.500 0v10l6-5z" fill="#6db36d" /></Svg></Tool>
                      <Gap $w={1} /><Divider /><Gap $w={3} />
                      <Tool><Svg s={17} vb={17}><path d="M6 3h11M6 8.500h11M6 14h11" stroke="#444" strokeWidth="1.5" /><path d="M1.500 1L2.500.5V4M1 6.500h2.500L1 10h3M1 12h3l-1.500 2L4 15.500 1 16" stroke="#6b9be6" strokeWidth="1.1" /></Svg></Tool>
                      <Tool><Svg s={17} vb={17}><path d="M6 3h11M6 8.500h11M6 14h11" stroke="#444" strokeWidth="1.5" /><path d="M1 1.500h3v3H1zM1 7h3v3H1zM1 12.500h3v3H1z" fill="#6b9be6" /></Svg></Tool>
                      <Gap $w={2} /><Divider /><Gap $w={3} />
                      <Tool $dim><Svg s={17} vb={17}>{indentLines}<path d="M6 5.500v6L1.500 8.500z" fill="#6b9be6" /></Svg></Tool>
                      <Tool $dim><Svg s={17} vb={17}>{indentLines}<path d="M2 5.500v6l4.500-3z" fill="#6b9be6" /></Svg></Tool>
                      <Gap $w={2} /><Divider /><Gap $w={3} />
                      <Tool><Svg s={17} vb={17}><rect x=".7" y="1.2" width="15.6" height="14.6" fill="#fff" stroke="#6b9be6" strokeWidth="1.4" /><path d="M3 4h11" stroke="#85c272" strokeWidth="1.4" /><path d="M3 6.500h11v7H3zM6.500 6.500v7M10.500 6.500v7M3 10h11" stroke="#8fb5ee" /></Svg></Tool>
                      <Tool><Svg s={17} vb={17}><path d="M1.500 2.500h13M3.500 5.500h11M1.500 8.500h8" stroke="#444" strokeWidth="1.5" /><path d="M1 11h15v3.500H1z" fill="#8fb5ee" /></Svg></Tool>
                    </ToolGroup>
                  </ToolRow>
                  <ToolRow>
                    <ToolGroup $w={99}>
                      <Gap $w={11} /><ArialText $size={13.5} $color="#474747"><Text w={41}>Format</Text></ArialText>
                      <Gap $w={32} /><Svg s={6} vb={6}><path d="M0 1.500h6L3 4.500z" fill="#474747" /></Svg>
                    </ToolGroup>
                    <ToolGroup $w={354}>
                      <Tool><Glyph>B</Glyph></Tool>
                      <Tool><Glyph $italic>I</Glyph></Tool>
                      <Tool><Glyph $line="underline" $size={16}>U</Glyph></Tool>
                      <Tool><Glyph $line="line-through" $size={16}>S</Glyph></Tool>
                      <Gap $w={2} /><Divider /><Gap $w={2} />
                      <Tool><Glyph $size={15}>X<sub>2</sub></Glyph></Tool>
                      <Tool><Glyph $size={16}>x<sup>2</sup></Glyph></Tool>
                      <Gap $w={3} /><Divider /><Gap $w={3} />
                      <Tool><Svg s={18} vb={18}><rect x=".5" y="2" width="16" height="12" fill="#4f86dc" stroke="#2f60ae" /><path d="M3 5v5M5.500 5v5M3 7.500h2.500M7 5.500h3M8.500 5.500V10M11 10V5.500l1.500 2 1.500-2V10" stroke="#dbe8fb" /><circle cx="13.5" cy="13.5" r="3.9" fill="#e56a24" /><path d="M11.500 13.500h4" stroke="#fff" strokeWidth="1.4" /></Svg></Tool>
                      <Gap $w={2} /><Divider /><Gap $w={2} />
                      <Tool><Svg s={18} vb={18}><rect x="1" y="2.5" width="8" height="5.5" rx="2.7" stroke="#666" strokeWidth="1.8" /><rect x="7.5" y="2.5" width="7.5" height="5.5" rx="2.7" stroke="#666" strokeWidth="1.8" /><path d="M4.500 5.200h7" stroke="#888" strokeWidth="1.6" /><PlusBadge x={12.5} y={12.5} /></Svg></Tool>
                      <Tool><Svg s={18} vb={18}><rect x="1" y="1" width="15" height="14.5" fill="#e3effc" stroke="#3f74ad" strokeWidth="1.3" /><rect x="3" y="3" width="11" height="8" fill="#6aaade" stroke="#3f74ad" /><path d="M3.500 10.500l3-3 2.500 2 2-1.500 3 2.500z" fill="#cde8f8" /><PlusBadge x={13.5} y={13.5} /></Svg></Tool>
                      <Tool><Svg s={18} vb={18}><path d="M3 1v16" stroke="#b5793a" strokeWidth="2.3" /><path d="M4.500 1.500c4-1.500 4 1.500 7 1.500l5 1-2 3 2 4.500c-5-1-7-2.500-12-1z" fill="#7db8f0" stroke="#4f8fd0" strokeWidth=".7" /><path d="M6 4l3 1M10 6l4 1" stroke="#d5eaff" strokeWidth="1.5" /></Svg></Tool>
                      <Tool><Glyph $blue $size={20}>Ω</Glyph></Tool>
                    </ToolGroup>
                  </ToolRow>
                </EditorTop>
                <EditorBody>
                  <Doc>
                    <Bullets>
                      <Item><Text w={25}>Jira</Text></Item>
                      <Item><Text w={88}>Browser stack</Text></Item>
                    </Bullets>
                    <DocHeading $mt={14}><Text w={280}>11. Zarządzanie incydentami, błędami</Text></DocHeading>
                    <Para><Text w={643}>W procesie testowym każdy wykryty błąd powinien być odpowiednio zaraportowany do systemu Jira.</Text></Para>
                    <Para><Text w={728}>Uwzględniając przy tym priorytet błędu, osobe dopowiedzialną ( develpera), komponent którego dotyczy problem.</Text></Para>
                    <Para><Text w={837}>Zgodnie z przyjętym flow przez naszą organizajcję, taki problem powinien zostać naprawiony przez developera i trafic do retestów.</Text></Para>
                    <DocHeading $mt={12}><Text w={203}>12. Role i odpowiedzialność</Text></DocHeading>
                    <Para $mt={13}><Text w={363}>Jan K. - implementacja skryptów testów automatycznych</Text></Para>
                    <Para><Text w={295}>Jan N - wykonywaniem przypadków testowych</Text></Para>
                    <Para><Text w={290}>Jan Z - projektowanie przypadków testowych</Text></Para>
                    <Para><Text w={183}>Jan W - wryfikacja user story</Text></Para>
                  </Doc>
                  <ScrollTrack $h={336}>
                    <ScrollArrow><Chevron up /></ScrollArrow>
                    <Thumb $top={224} $h={50} />
                    <ScrollArrow><Chevron /></ScrollArrow>
                  </ScrollTrack>
                </EditorBody>
                <EditorBottom>
                  <ArialText $size={12} $bold $color="#474747"><Text w={27}>body</Text></ArialText>
                  <Grip />
                </EditorBottom>
              </Editor>
            </Value>
            {["Active", "Public"].map((name, i) => (
              <React.Fragment key={name}>
                <Label><Text w={i ? 37 : 39}>{name}</Text></Label>
                <Value $pt={9}><Check><Svg s={14} vb={14} stroke="#fff" sw={2}><path d="M3 7.300l2.700 2.700L11 4" /></Svg></Check></Value>
              </React.Fragment>
            ))}
            <Label $last><Text w={48}>API Key</Text></Label>
            <KeyValue $pt={7}><ArialText $size={14.5}><Text w={537}>2287715db181b913053e12153cdc851a413695b6f6ea4cde6b98ba6b09124817</Text></ArialText></KeyValue>
          </PlanForm>
          <Actions>
            <Button $w={52}><ArialText $size={13} $color="#000"><Text w={41}>Update</Text></ArialText></Button>
            <Button $w={51}><ArialText $size={13} $color="#000"><Text w={40}>Cancel</Text></ArialText></Button>
          </Actions>
          <AttachedTitle><ArialText $size={13} $bold><Text w={95}>Attached files :</Text></ArialText></AttachedTitle>
          <FileBox>
            <ArialText $size={14.5} $bold><Text w={27}>File</Text></ArialText>
            <FileRow>
              <BrowseButton><Text w={82}>Przeglądaj...</Text></BrowseButton>
              <ArialText $size={14.8}><Text w={125}>Nie wybrano pliku.</Text></ArialText>
            </FileRow>
          </FileBox>
        </WorkPane>
      </Page>
      <ScrollTrack $h={830}>
        <ScrollArrow><Chevron up /></ScrollArrow>
        <Thumb $top={0} $h={645} />
        <ScrollArrow><Chevron /></ScrollArrow>
      </ScrollTrack>
    </Frame>

    <Taskbar>
      {taskIcons.map((t, i) => <TaskItem key={i} $w={t.w} $open={t.open} $active={t.active}>{t.icon}</TaskItem>)}
      <Tray>
        {trayIcons.map((icon, i) => <TaskItem key={i} $w={24.08}>{icon}</TaskItem>)}
        <Clock><Text w={25}>11:51</Text><br /><Text w={54}>09.01.2023</Text></Clock>
        <Gap $w={11} />
        <TaskItem $w={28}>
          <Svg s={26} vb={26}>
            <path d="M2 4h16v12H8l-4 4v-4H2z" fill="#fff" /><path d="M4.500 7.500h11M4.500 10.500h11M4.500 13.500h7" stroke="#222" />
            <circle cx="17.5" cy="18.5" r="7" fill="#3a3a3a" stroke="#a5a5a5" /><text x="14.3" y="22.7" fontSize="11.5" fill="#fff" fontFamily="Open Sans, sans-serif" fontWeight="600">2</text>
          </Svg>
        </TaskItem>
        <Gap $w={11} />
        <ShowDesktop />
      </Tray>
    </Taskbar>
    <Gradients />
  </Screen>
);

export default App;
